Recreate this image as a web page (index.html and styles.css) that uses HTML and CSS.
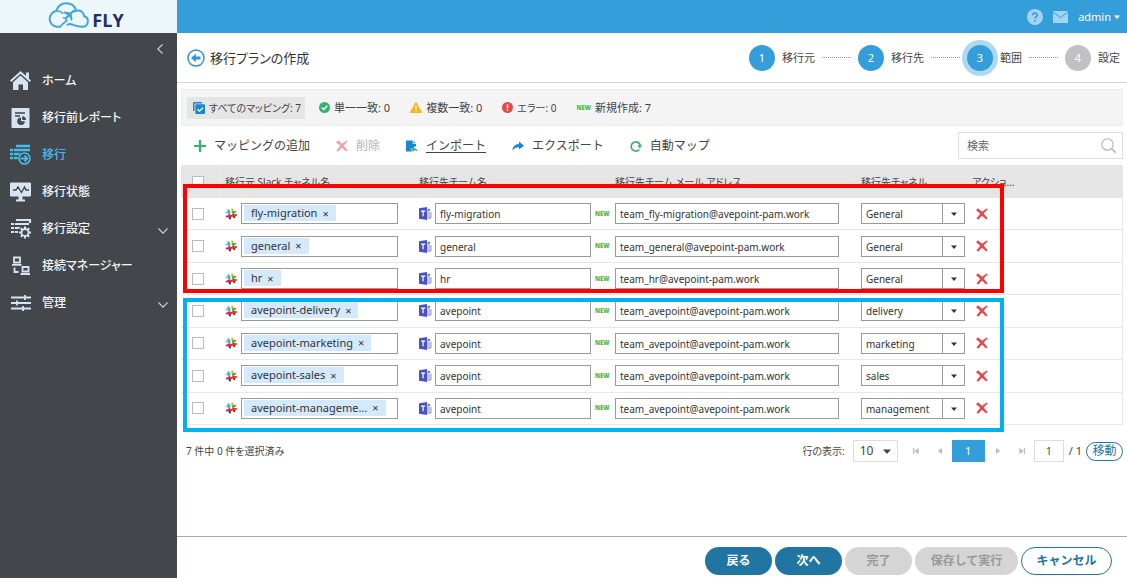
FILE: index.html
```html
<!DOCTYPE html>
<html lang="ja">
<head>
<meta charset="utf-8">
<title>FLY</title>
<link rel="stylesheet" href="styles.css">
</head>
<body>
<svg class="defs" aria-hidden="true">
  <symbol id="slack" viewBox="0 0 12 12">
    <g fill="none" stroke-width="2" stroke-linecap="round">
      <path d="M1.300 4.600 4.800 3.700" stroke="#6ecadc"/><path d="M3.400 2.200 4.300 6.200" stroke="#3eb991"/>
      <path d="M7.200 1.500 8.200 5.500" stroke="#e9a820"/><path d="M7.800 4.300 10.400 3.700" stroke="#5fa84e"/>
      <path d="M4.300 7.800 5 10.500M8.500 6.500 9.300 9.300" stroke="#6b1c38"/>
      <path d="M1.800 8.600 6 7.800" stroke="#e01765"/><path d="M6 8 11 6.900" stroke="#e33a2c"/>
    </g>
  </symbol>
  <symbol id="teams" viewBox="0 0 13 13">
    <circle cx="9.8" cy="3" r="1.6" fill="#8287cf"/>
    <path d="M8 5h4.600v4.200a2.300 2.300 0 0 1-4.600 1z" fill="#a6a9df"/>
    <path d="M9.300 5v6M11 5v5" stroke="#fff" stroke-width=".5"/>
    <path d="M0 1.300 8 0v13L0 11.700z" fill="#4b53bc"/>
    <path d="M2 4.200h4.200M4.100 4.200v5" stroke="#fff" stroke-width="1.200"/>
  </symbol>
  <symbol id="cross" viewBox="0 0 12 12">
    <path d="M0 2.200 2 .3 6 3.800 10.600.6 11.800 1.300 7.700 5.500 11.600 10.200 10.200 11.600 6 7.700 2.300 11.600 .4 10.700 4.200 5.700z" fill="currentColor"/>
  </symbol>
  <symbol id="caret" viewBox="0 0 8 5"><path d="M0 .5h8L4 5z" fill="currentColor"/></symbol>
  <symbol id="chevron" viewBox="0 0 10 6"><path d="m.5.5 4.500 4.700L9.500.5" fill="none" stroke="currentColor" stroke-width="1.200"/></symbol>
  <symbol id="step" viewBox="0 0 6 6"><path d="M5 0v6L.8 3z" fill="currentColor"/></symbol>
  <symbol id="edge" viewBox="0 0 6 6"><path d="M.6 0v6" stroke="currentColor" stroke-width="1.200"/><path d="M5.600 0v6L1.400 3z" fill="currentColor"/></symbol>
</svg>

<div class="app">
  <aside class="sidebar">
    <a class="logo" href="#">
      <svg width="42" height="27" viewBox="0 0 42 27" fill="none" stroke="#42a5df" stroke-width="2" stroke-linecap="round">
        <path d="M13 24.800H9.500A8 8 0 0 1 9.300 9C10.300 4.300 14.500 1.200 19.200 1.200c5 0 8.800 3 10 7.600 1.800-.6 4-.3 5.600.9 1.500 1.100 2.300 2.600 2.400 4.500 2.300.6 3.700 2.600 3.700 5 0 3.200-2.300 5.600-5.400 5.600-3.500 0-7-.9-10-2.200-2-.8-3.500-.7-5 .1"/>
        <path d="M9.300 9c2.600-.3 4.700.4 6.200 2.200M29.200 8.800c-1 .2-1.800.6-2.500 1.200" stroke-width="1.600"/>
        <path d="M13 24.800c2-2.200 4-4.200 7-6.300" stroke-width="1.600"/>
        <path d="m27.800 8.300c-1-.5-2.100-.1-2.900.7l-1.700 1.500-6-.9-1.200 1.100 4.500 2.200-2.400 2.500-2-.3-.8.8 2.600 1.200 1.200 2.600.8-.8-.2-2 2.500-2.300 2.100 4.500 1.200-1.200-.8-5.900 1.500-1.600c.9-.8 2-1.200 1.600-2.100z" fill="#42a5df" stroke="none"/>
      </svg>
      <span class="logo-text">FLY</span>
    </a>
    <button class="collapse" aria-label="折りたたむ"><svg width="6" height="10" viewBox="0 0 6 10"><path d="M5.500.5.800 5l4.700 4.500" fill="none" stroke="currentColor" stroke-width="1.200"/></svg></button>
    <nav class="menu">
      <a class="menu-item" href="#">
        <svg width="22" height="22" viewBox="0 0 22 22" fill="currentColor"><path d="M10.500 1 0 10.600l1.300 1.300 9.200-8.200 9.200 8.200 1.300-1.300-2-1.800V2.500h-3v3.300z"/><path d="M3 12.200 10.500 5.500l7.500 6.700V20h-5v-5.500H8.500V20H3z"/></svg>
        <span>ホーム</span></a>
      <a class="menu-item" href="#">
        <svg width="22" height="22" viewBox="0 0 22 22"><path d="M2.500 1h16a1 1 0 0 1 1 1v18a1 1 0 0 1-1 1h-16a1 1 0 0 1-1-1V2a1 1 0 0 1 1-1z" fill="currentColor"/><path d="M5 6h10M5 9h5" stroke="#43464b" stroke-width="1.400"/><path d="M11 10.500a3.800 3.800 0 1 0 3.800 3.800H11zM12.200 9.300v3.800H16a3.800 3.800 0 0 0-3.800-3.800z" fill="#43464b"/></svg>
        <span>移行前レポート</span></a>
      <a class="menu-item current" href="#">
        <svg width="22" height="22" viewBox="0 0 22 22"><path d="M6 2h14M0 6h20M0 10h17M0 14h8" stroke="currentColor" stroke-width="2.600"/><path d="M3.500 4.500v11" stroke="#43464b" stroke-width=".8"/><circle cx="14.500" cy="14.500" r="6.800" fill="#43464b"/><circle cx="14.500" cy="14.500" r="5.500" fill="none" stroke="currentColor" stroke-width="1.600"/><path d="M10.500 14.500h7m-3-3 3 3-3 3" fill="none" stroke="currentColor" stroke-width="1.800"/></svg>
        <span>移行</span></a>
      <a class="menu-item" href="#">
        <svg width="22" height="22" viewBox="0 0 22 22"><path d="M1 1.500h19a1 1 0 0 1 1 1v12a1 1 0 0 1-1 1h-7.500v3H15v2H6v-2h2.500v-3H1a1 1 0 0 1-1-1v-12a1 1 0 0 1 1-1z" fill="currentColor"/><path d="M3 9h3l2-3 3.500 5.500L14.500 6l1.500 3h3" fill="none" stroke="#43464b" stroke-width="1.300"/></svg>
        <span>移行状態</span></a>
      <a class="menu-item" href="#">
        <svg width="22" height="22" viewBox="0 0 22 22"><path d="M6 2h14v3M1 6h18M1 10h12M1 14h7" fill="none" stroke="currentColor" stroke-width="2.200"/><path d="M4.500 4.500v11" stroke="#43464b" stroke-width=".8"/><circle cx="15" cy="14.500" r="7" fill="#43464b"/><path d="M15 8.500v12M9 14.500h12M10.800 10.300l8.400 8.400M19.200 10.300l-8.400 8.400" stroke="currentColor" stroke-width="2"/><circle cx="15" cy="14.500" r="4.400" fill="currentColor"/><circle cx="15" cy="14.500" r="2.600" fill="#43464b"/></svg>
        <span>移行設定</span><svg class="expand" width="10" height="6"><use href="#chevron"/></svg></a>
      <a class="menu-item" href="#">
        <svg width="22" height="22" viewBox="0 0 22 22" fill="none" stroke="currentColor" stroke-width="1.800"><path d="M4 2.500h6v5H4zM2 9.800h9.500M12.500 12h6v4.500h-6zM10.500 19h9.500"/><path d="M4.500 12.500V17H8.500"/></svg>
        <span>接続マネージャー</span></a>
      <a class="menu-item" href="#">
        <svg width="22" height="22" viewBox="0 0 22 22" stroke="currentColor" stroke-width="1.800"><path d="M1 5.500h20M1 11h20M1 16.500h20M15 3v5M7 8.500v5M13 14v5"/></svg>
        <span>管理</span><svg class="expand" width="10" height="6"><use href="#chevron"/></svg></a>
    </nav>
  </aside>

  <div class="main">
    <header class="topbar">
      <button class="icon-button" aria-label="ヘルプ"><svg width="16" height="16" viewBox="0 0 16 16"><circle cx="8" cy="8" r="8" fill="currentColor"/><path d="M5.700 6.300C5.700 3.500 10.300 3.500 10.300 6c0 1.500-2.200 1.600-2.200 3.500M8.100 11v1.500" fill="none" stroke="#349edb" stroke-width="1.600"/></svg></button>
      <button class="icon-button" aria-label="メッセージ"><svg width="15" height="12" viewBox="0 0 15 12"><path d="M0 0h15v12H0z" fill="currentColor"/><path d="m0 1 7.500 5.500L15 1" fill="none" stroke="#349edb"/></svg></button>
      <button class="account">admin <svg width="6" height="4"><use href="#caret"/></svg></button>
    </header>

    <div class="page-head">
      <button class="back" aria-label="戻る"><svg width="18" height="18" viewBox="0 0 18 18"><circle cx="9" cy="9" r="8" fill="none" stroke="currentColor" stroke-width="1.500"/><path d="m4 9 4.800-4.200v2.700h4.700v3H8.800v2.700z" fill="currentColor"/></svg></button>
      <h1>移行プランの作成</h1>
      <ol class="steps">
        <li><span class="dot">1</span><span>移行元</span><i></i></li>
        <li><span class="dot">2</span><span>移行先</span><i></i></li>
        <li><span class="dot active">3</span><span>範囲</span><i></i></li>
        <li><span class="dot off">4</span><span>設定</span></li>
      </ol>
    </div>

    <main class="content">
      <div class="filters">
        <button class="filter selected"><svg width="12" height="12" viewBox="0 0 12 12"><path d="M0 1a1 1 0 0 1 1-1h8v1.500H1.500V9H0z" fill="#1a86cc"/><rect x="2.300" y="2.300" width="9.700" height="9.700" rx="1" fill="#1a86cc"/><path d="m4.500 7.200 2 2L10 5.700" fill="none" stroke="#fff" stroke-width="1.300"/></svg><span class="tight">すべてのマッピング: 7</span></button>
        <button class="filter"><svg width="11" height="11" viewBox="0 0 11 11"><circle cx="5.500" cy="5.500" r="5.500" fill="#35b36d"/><path d="m2.700 5.600 2 2 3.600-3.800" fill="none" stroke="#fff" stroke-width="1.400"/></svg><span>単一一致: 0</span></button>
        <button class="filter"><svg width="12" height="11" viewBox="0 0 12 11"><path d="M6 .5 11.700 10.500H.3z" fill="#fdb515" stroke="#fdb515" stroke-linejoin="round"/><path d="M6 3.500v3.700M6 8.200v1.300" stroke="#fff" stroke-width="1.300"/></svg><span>複数一致: 0</span></button>
        <button class="filter"><svg width="11" height="11" viewBox="0 0 11 11"><circle cx="5.500" cy="5.500" r="5.500" fill="#e5484d"/><path d="M5.500 2.200v4.100M5.500 7.400V9" stroke="#fff" stroke-width="1.500"/></svg><span class="tight">エラー: 0</span></button>
        <button class="filter"><b class="new">NEW</b><span>新規作成: 7</span></button>
      </div>

      <div class="toolbar">
        <button class="tool"><svg width="12" height="12" viewBox="0 0 12 12"><path d="M6 0v12M0 6h12" stroke="#35b36d" stroke-width="2.200"/></svg><span>マッピングの追加</span></button>
        <button class="tool" disabled><svg class="cross" width="12" height="12"><use href="#cross"/></svg><span>削除</span></button>
        <button class="tool"><svg width="12" height="12" viewBox="0 0 12 12"><path d="M0 .5h7l3 3V6L4.500 9l2 2.500H0z" fill="#1a86cc"/><path d="M7 .5v3h3" fill="none" stroke="#fff" stroke-width=".8"/><path d="M5 9.200 8 6.500v1.700c2 0 3 1 3.300 3.300C10 10.500 9 10.200 8 10.200v1.600z" fill="#35b36d"/></svg><span class="underlined">インポート</span></button>
        <button class="tool"><svg width="12" height="12" viewBox="0 0 12 12"><path d="M7 1.500 12 5.700 7 9.500V7.200C4 7.200 2 8.300.5 10.700.6 6.600 3 4.200 7 3.900z" fill="#1a86cc"/></svg><span>エクスポート</span></button>
        <button class="tool"><svg width="12" height="12" viewBox="0 0 12 12"><path d="M9.300 9.500A4.600 4.600 0 1 1 10.300 5.500" fill="none" stroke="#35b36d" stroke-width="1.700"/><path d="M7.300 5.300H12L9.800 8.500z" fill="#35b36d"/></svg><span>自動マップ</span></button>
        <label class="search"><input type="search" placeholder="検索" aria-label="検索"><svg width="15" height="15" viewBox="0 0 15 15" fill="none" stroke="#b9b9b9" stroke-width="1.200"><circle cx="6.500" cy="6.500" r="5.700"/><path d="m10.700 10.700 4 4" stroke-width="1.600"/></svg></label>
      </div>

      <div class="grid">
        <table>
          <colgroup><col class="c-check"><col class="c-source"><col class="c-team"><col class="c-mail"><col class="c-channel"><col class="c-action"><col></colgroup>
          <thead><tr>
            <th><input type="checkbox" aria-label="すべて選択"></th>
            <th>移行元 Slack チャネル名</th><th>移行先チーム名</th><th>移行先チーム メール アドレス</th><th>移行先チャネル</th><th>アクショ…</th><th></th>
          </tr></thead>
          <tbody>
            <tr>
              <td><input type="checkbox" aria-label="fly-migration"></td>
              <td><div class="cell"><svg width="12" height="12"><use href="#slack"/></svg><div class="chips"><span class="chip">fly-migration<button aria-label="削除">×</button></span></div></div></td>
              <td><div class="cell"><svg width="13" height="13"><use href="#teams"/></svg><input class="field" type="text" value="fly-migration" aria-label="チーム名"><b class="new">NEW</b></div></td>
              <td><input class="field mail" type="text" value="team_fly-migration@avepoint-pam.work" aria-label="メール アドレス"></td>
              <td><span class="combo"><select aria-label="チャネル"><option>General</option></select><svg width="6" height="4"><use href="#caret"/></svg></span></td>
              <td><button class="remove" aria-label="削除"><svg width="12" height="12"><use href="#cross"/></svg></button></td><td></td>
            </tr>
            <tr>
              <td><input type="checkbox" aria-label="general"></td>
              <td><div class="cell"><svg width="12" height="12"><use href="#slack"/></svg><div class="chips"><span class="chip">general<button aria-label="削除">×</button></span></div></div></td>
              <td><div class="cell"><svg width="13" height="13"><use href="#teams"/></svg><input class="field" type="text" value="general" aria-label="チーム名"><b class="new">NEW</b></div></td>
              <td><input class="field mail" type="text" value="team_general@avepoint-pam.work" aria-label="メール アドレス"></td>
              <td><span class="combo"><select aria-label="チャネル"><option>General</option></select><svg width="6" height="4"><use href="#caret"/></svg></span></td>
              <td><button class="remove" aria-label="削除"><svg width="12" height="12"><use href="#cross"/></svg></button></td><td></td>
            </tr>
            <tr>
              <td><input type="checkbox" aria-label="hr"></td>
              <td><div class="cell"><svg width="12" height="12"><use href="#slack"/></svg><div class="chips"><span class="chip">hr<button aria-label="削除">×</button></span></div></div></td>
              <td><div class="cell"><svg width="13" height="13"><use href="#teams"/></svg><input class="field" type="text" value="hr" aria-label="チーム名"><b class="new">NEW</b></div></td>
              <td><input class="field mail" type="text" value="team_hr@avepoint-pam.work" aria-label="メール アドレス"></td>
              <td><span class="combo"><select aria-label="チャネル"><option>General</option></select><svg width="6" height="4"><use href="#caret"/></svg></span></td>
              <td><button class="remove" aria-label="削除"><svg width="12" height="12"><use href="#cross"/></svg></button></td><td></td>
            </tr>
            <tr>
              <td><input type="checkbox" aria-label="avepoint-delivery"></td>
              <td><div class="cell"><svg width="12" height="12"><use href="#slack"/></svg><div class="chips"><span class="chip">avepoint-delivery<button aria-label="削除">×</button></span></div></div></td>
              <td><div class="cell"><svg width="13" height="13"><use href="#teams"/></svg><input class="field" type="text" value="avepoint" aria-label="チーム名"><b class="new">NEW</b></div></td>
              <td><input class="field mail" type="text" value="team_avepoint@avepoint-pam.work" aria-label="メール アドレス"></td>
              <td><span class="combo"><select aria-label="チャネル"><option>delivery</option></select><svg width="6" height="4"><use href="#caret"/></svg></span></td>
              <td><button class="remove" aria-label="削除"><svg width="12" height="12"><use href="#cross"/></svg></button></td><td></td>
            </tr>
            <tr>
              <td><input type="checkbox" aria-label="avepoint-marketing"></td>
              <td><div class="cell"><svg width="12" height="12"><use href="#slack"/></svg><div class="chips"><span class="chip">avepoint-marketing<button aria-label="削除">×</button></span></div></div></td>
              <td><div class="cell"><svg width="13" height="13"><use href="#teams"/></svg><input class="field" type="text" value="avepoint" aria-label="チーム名"><b class="new">NEW</b></div></td>
              <td><input class="field mail" type="text" value="team_avepoint@avepoint-pam.work" aria-label="メール アドレス"></td>
              <td><span class="combo"><select aria-label="チャネル"><option>marketing</option></select><svg width="6" height="4"><use href="#caret"/></svg></span></td>
              <td><button class="remove" aria-label="削除"><svg width="12" height="12"><use href="#cross"/></svg></button></td><td></td>
            </tr>
            <tr>
              <td><input type="checkbox" aria-label="avepoint-sales"></td>
              <td><div class="cell"><svg width="12" height="12"><use href="#slack"/></svg><div class="chips"><span class="chip">avepoint-sales<button aria-label="削除">×</button></span></div></div></td>
              <td><div class="cell"><svg width="13" height="13"><use href="#teams"/></svg><input class="field" type="text" value="avepoint" aria-label="チーム名"><b class="new">NEW</b></div></td>
              <td><input class="field mail" type="text" value="team_avepoint@avepoint-pam.work" aria-label="メール アドレス"></td>
              <td><span class="combo"><select aria-label="チャネル"><option>sales</option></select><svg width="6" height="4"><use href="#caret"/></svg></span></td>
              <td><button class="remove" aria-label="削除"><svg width="12" height="12"><use href="#cross"/></svg></button></td><td></td>
            </tr>
            <tr>
              <td><input type="checkbox" aria-label="avepoint-management"></td>
              <td><div class="cell"><svg width="12" height="12"><use href="#slack"/></svg><div class="chips"><span class="chip">avepoint-manageme...<button aria-label="削除">×</button></span></div></div></td>
              <td><div class="cell"><svg width="13" height="13"><use href="#teams"/></svg><input class="field" type="text" value="avepoint" aria-label="チーム名"><b class="new">NEW</b></div></td>
              <td><input class="field mail" type="text" value="team_avepoint@avepoint-pam.work" aria-label="メール アドレス"></td>
              <td><span class="combo"><select aria-label="チャネル"><option>management</option></select><svg width="6" height="4"><use href="#caret"/></svg></span></td>
              <td><button class="remove" aria-label="削除"><svg width="12" height="12"><use href="#cross"/></svg></button></td><td></td>
            </tr>
          </tbody>
        </table>
        <div class="mark mark-red"></div>
        <div class="mark mark-blue"></div>
      </div>

      <div class="pager">
        <span class="count tight">7 件中 0 件を選択済み</span>
        <label class="tight" for="rows">行の表示:</label>
        <span class="rows"><select id="rows"><option>10</option></select><svg width="8" height="5"><use href="#caret"/></svg></span>
        <button class="nav" aria-label="最初"><svg width="6" height="6"><use href="#edge"/></svg></button>
        <button class="nav" aria-label="前へ"><svg width="6" height="6"><use href="#step"/></svg></button>
        <button class="page">1</button>
        <button class="nav flip" aria-label="次へ"><svg width="6" height="6"><use href="#step"/></svg></button>
        <button class="nav flip" aria-label="最後"><svg width="6" height="6"><use href="#edge"/></svg></button>
        <input class="goto" type="text" value="1" aria-label="ページ">
        <span class="total">/ 1</span>
        <button class="go">移動</button>
      </div>
    </main>

    <footer class="actions">
      <button class="primary">戻る</button>
      <button class="primary">次へ</button>
      <button disabled>完了</button>
      <button class="wide" disabled>保存して実行</button>
      <button class="cancel">キャンセル</button>
    </footer>
  </div>
</div>
</body>
</html>
```
FILE: styles.css
```css
* { box-sizing: border-box; }

body {
  margin: 0;
  font: 11px/16px "Noto Sans", "Noto Sans CJK JP", sans-serif;
  color: #444;
  background: #fff;
}

button, input, select { font: inherit; color: inherit; margin: 0; border-radius: 0; }
button { padding: 0; border: 0; background: none; white-space: nowrap; }
a { color: inherit; text-decoration: none; }
svg { display: block; flex: none; }
.defs { display: none; }

.app { display: flex; min-height: 100vh; }

/* Sidebar */
.sidebar {
  width: 177px;
  flex: none;
  display: flex;
  flex-direction: column;
  background: #43464b;
}
.logo {
  height: 33px;
  display: flex;
  align-items: center;
  justify-content: center;
  gap: 3px;
  padding: 0 6px 2px 0;
  background: #edf6f9;
}
.logo-text { font: bold 18px/24px "Open Sans", sans-serif; color: #252e66; padding-top: 8px; }
.collapse { align-self: flex-end; padding: 11px 14px 8px; color: #c9cdd2; }
.menu { display: flex; flex-direction: column; }
.menu-item {
  display: flex;
  align-items: center;
  gap: 10px;
  height: 37px;
  padding: 0 9px 0 10px;
  color: #d5e3f2;
}
.menu-item span {
  flex: 1;
  font-size: 12px;
  font-weight: 500;
  font-feature-settings: "palt";
  white-space: nowrap;
  color: #f4f4f4;
}
.menu-item.current, .menu-item.current span { color: #48bde8; }
.expand { color: #c9cdd2; align-self: flex-end; margin-bottom: 13px; }

/* Header */
.main { flex: 1; min-width: 0; display: flex; flex-direction: column; }
.topbar {
  height: 33px;
  display: flex;
  align-items: center;
  justify-content: flex-end;
  gap: 10px;
  padding-right: 7px;
  background: #349edb;
}
.icon-button { color: #a3d3f0; }
.account { display: flex; align-items: center; gap: 3px; color: #fff; }
.page-head {
  height: 50px;
  display: flex;
  align-items: center;
  padding: 0 7px 0 10px;
  border-bottom: 1px solid #d4d4d4;
}
.back { color: #2b95d6; }
h1 {
  margin: 0 auto 0 5px;
  font-size: 13px;
  font-weight: 400;
  font-feature-settings: "palt";
  color: #333;
}
.steps { display: flex; gap: 7px; margin: 0; padding: 0; list-style: none; }
.steps li { display: flex; align-items: center; gap: 7px; white-space: nowrap; }
.steps i { width: 29px; border-top: 1px dotted #999; }
.dot {
  width: 26px;
  height: 26px;
  line-height: 26px;
  border-radius: 50%;
  text-align: center;
  color: #fff;
  background: #349edb;
}
.dot.active { box-shadow: 0 0 0 5px #aed8f0; }
.dot.off { background: #c1c1c1; }

/* Filters and toolbar */
.content { flex: 1; padding: 6px 4px 0; }
.filters {
  display: flex;
  align-items: center;
  gap: 8px;
  height: 37px;
  padding: 0 5px;
  background: #f4f4f4;
  border: 1px solid #eee;
}
.filter { display: flex; align-items: center; gap: 4px; height: 22px; padding: 0 6px; }
.filter.selected { padding: 0 4px 0 6px; background: #e5e5e5; }
.tight { font-size: 10px; font-feature-settings: "palt"; }
.new { flex: none; font: 900 6px/10px "Noto Sans", sans-serif; color: #4db848; }
.toolbar { display: flex; align-items: center; gap: 26px; height: 39px; padding-left: 13px; }
.tool { display: flex; align-items: center; gap: 8px; font-size: 12px; }
.tool:disabled { color: #b5b5b5; }
.cross { color: #f0a3a3; }
.underlined { text-decoration: underline; text-underline-offset: 2px; }
.search {
  display: flex;
  align-items: center;
  width: 165px;
  height: 27px;
  margin-left: auto;
  padding: 0 6px 0 8px;
  border: 1px solid #ddd;
}
.search input { flex: 1; min-width: 0; border: 0; padding: 0; outline: 0; appearance: none; }
.search input::placeholder { color: #666; opacity: 1; }

/* Mapping table */
.grid { position: relative; }
table {
  width: 100%;
  height: 260px;
  table-layout: fixed;
  border-spacing: 0;
  border-right: 1px solid #e8e8e8;
}
.c-check { width: 40px; }
.c-source { width: 194px; }
.c-team { width: 196px; }
.c-mail { width: 246px; }
.c-channel { width: 111px; }
.c-action { width: 48px; }
th, td { padding: 0 4px; text-align: left; vertical-align: middle; }
th {
  height: 33px;
  background: #e5e5e5;
  font-size: 10px;
  font-weight: 400;
  font-feature-settings: "palt";
  white-space: nowrap;
}
th:first-child, td:first-child { padding-left: 11px; }
th:first-child { border-right: 1px solid #eee; }
td { border-bottom: 1px solid #e8e8e8; color: #333; }
[type="checkbox"] {
  display: block;
  width: 12px;
  height: 12px;
  appearance: none;
  border: 1px solid #bbb;
  background: #fff;
}
.cell { display: flex; align-items: center; gap: 4px; }
.chips {
  width: 157px;
  height: 21px;
  padding: 1px 2px;
  border: 1px solid #999;
  background: #fff;
}
.chip {
  display: inline-flex;
  gap: 5px;
  height: 16px;
  padding: 0 7px;
  font-size: 11px;
  line-height: 15px;
  vertical-align: top;
  white-space: nowrap;
  background: #d5e9fd;
}
.field {
  width: 156px;
  height: 21px;
  padding: 1px 4px 0;
  font-size: 10px;
  border: 1px solid #999;
  background: #fff;
}
.cell .field { margin-left: -1px; }
.mail { display: block; width: 224px; }
.combo { position: relative; display: block; width: 104px; }
.combo select {
  display: block;
  width: 100%;
  height: 21px;
  padding: 1px 4px 0;
  font-size: 10px;
  appearance: none;
  border: 1px solid #999;
  background: linear-gradient(#999, #999) right 21px top / 1px 100% no-repeat #fff;
}
.combo svg { position: absolute; right: 8px; top: 9px; pointer-events: none; }
.remove { display: block; margin-left: 4px; color: #e5484d; }
.mark { position: absolute; left: 2px; width: 821px; border: 4px solid; pointer-events: none; }
.mark-red { top: 19px; height: 109px; border-color: #f00; }
.mark-blue { top: 133px; height: 134px; border-color: #00b0f0; }

/* Pager */
.pager { display: flex; align-items: center; margin-top: 15px; padding-left: 5px; }
.count { margin-right: auto; }
.rows { position: relative; margin: 0 12px 0 8px; }
.rows select {
  display: block;
  width: 45px;
  height: 22px;
  padding: 0 6px;
  font-size: 12px;
  appearance: none;
  border: 1px solid #ddd;
  background: #fff;
}
.rows svg { position: absolute; right: 7px; top: 9px; pointer-events: none; }
.nav { display: flex; justify-content: center; width: 12px; margin-right: 12px; color: #bbb; }
.flip { transform: scaleX(-1); margin: 0 0 0 12px; }
.page { width: 33px; height: 22px; margin-left: -6px; margin-right: -5px; color: #fff; background: #349edb; }
.goto { width: 30px; height: 22px; margin: 0 5px 0 6px; text-align: center; border: 1px solid #ddd; font-size: 10px; }
.total { margin-right: 4px; }
.go {
  width: 37px;
  height: 19px;
  line-height: 16px;
  border: 1px solid #2175a3;
  border-radius: 10px;
  font-size: 12px;
  color: #2175a3;
}

/* Footer */
.actions {
  display: flex;
  justify-content: flex-end;
  gap: 3px;
  padding: 10px 15px 3px;
  border-top: 1px solid #aaa;
}
.actions button {
  width: 67px;
  height: 28px;
  border-radius: 14px;
  font-size: 12px;
  font-weight: 700;
  color: #999;
  background: #d5d5d5;
}
.actions .primary { color: #fff; background: #2175a3; }
.actions .wide { width: 103px; }
.actions .cancel { width: 91px; color: #2175a3; background: #fff; border: 1px solid #2175a3; }
```
